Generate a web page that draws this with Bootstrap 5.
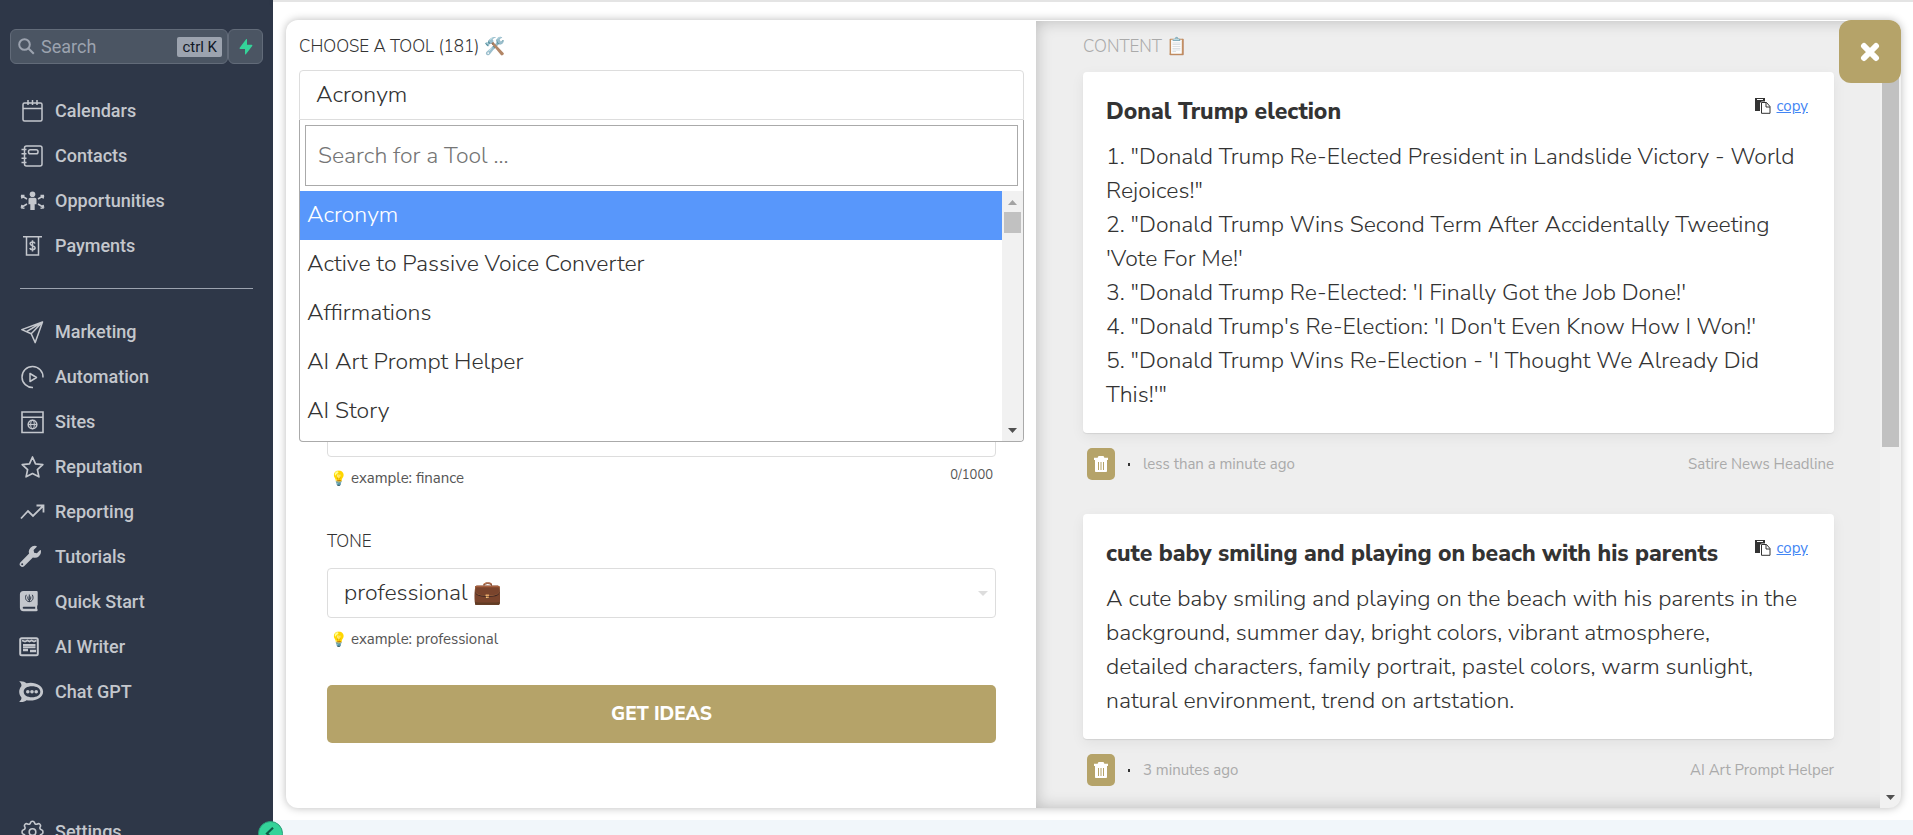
<!DOCTYPE html>
<html lang="en">
<head>
<meta charset="utf-8">
<meta name="viewport" content="width=device-width, initial-scale=1">
<title>AI Writer</title>
<link href="https://cdn.jsdelivr.net/npm/bootstrap@5.3.0/dist/css/bootstrap.min.css" rel="stylesheet">
<style>
  :root { --gold: #b5a369; --ink: #333; --line: #ddd; --muted: #aaa; }
  body { font-family: "Nunito Sans", Lato, "Open Sans", sans-serif; font-weight: 300; color: var(--ink); }
  textarea { resize: none; }

  /* Sidebar */
  .sidebar { width: 273px; padding: 29px 10px 0; background: #2e3748; font-family: Roboto, sans-serif; }
  .search-box, .bolt-btn { height: 35px; background: #4b5563; border: 1px solid #626b79; border-radius: 6px; }
  .search-box { padding: 0 5px 0 7px; gap: 6px; }
  .search-box input { width: 0; background: none; border: 0; outline: 0; padding: 0; color: #9ca3af; font-size: 18px; font-weight: 400; }
  .search-box input::placeholder { color: #9ca3af; opacity: 1; }
  .search-box kbd { background: #9ca3af; color: #111827; font: 400 15px/20px Roboto, sans-serif; padding: 0 5px; border-radius: 2px; }
  .bolt-btn { width: 35px; padding: 0; }
  .side-link { height: 45px; padding-left: 9px; gap: 10px; color: #c4c7cd; font-size: 18px; font-weight: 500; text-decoration: none; }
  .side-link:hover { color: #fff; }
  .side-link svg { width: 26px; height: 24px; flex: none; }
  .side-rule { margin: 20px 10px; border-color: #9ca3af; opacity: 1; }
  .side-foot { padding-top: 95px; }
  .collapse-btn { position: absolute; left: 258px; bottom: -11px; width: 25px; height: 25px; padding: 0; border: 1px solid #2a9d78; background: #34d399; z-index: 2; }

  /* Workspace */
  .topbar { height: 2px; background: #e4e4e4; box-shadow: 0 1px 6px rgba(0,0,0,.16); }
  .stage { padding: 18px 12px 12px 13px; background: #fff; }
  .bottom-strip { height: 15px; background: #f1f6fa; }
  .panel { grid-template-columns: minmax(0, 750fr) minmax(0, 865fr); border-radius: 12px; background: #fff; box-shadow: 0 0 8px rgba(0,0,0,.27); }
  .pane-left { padding: 0 12px 0 13px; }
  .pane-right { margin-top: 1px; border-radius: 0 12px 12px 0; overflow: hidden; background: #eee; box-shadow: inset 0 0 16px rgba(0,0,0,.22); }
  .feed { padding: 0 46px 0 47px; }
  .caption { font-size: 17px; line-height: 24px; }
  .caption-emoji { font-size: 17px; opacity: .8; }
  .pane-left > .caption { margin: 15px 0 11px; }
  .feed > .caption { margin: 14px 0 13px; color: var(--muted); }

  .field { border: 1px solid var(--line); border-radius: 4px; background: #fff; color: var(--ink); font-size: 23px; font-weight: 300; width: 100%; }
  select.field { appearance: none; height: 50px; padding: 1px 16px 0; }
  .tool-select { border-radius: 4px 4px 0 0; }

  .tool-menu { position: absolute; top: 50px; left: 0; right: 0; height: 322px; border: 1px solid #aaa; border-top: 0; border-radius: 0 0 4px 4px; background: #fff; overflow: hidden; z-index: 3; }
  .tool-search { margin: 5px; height: 61px; border: 1px solid #aaa; padding: 0 12px; font-size: 23px; font-weight: 300; outline: 0; color: var(--ink); }
  .tool-search::placeholder { color: #757575; opacity: 1; }
  .tool-item { height: 49px; padding: 0 7px; font-size: 23px; line-height: 48px; color: var(--ink); white-space: nowrap; flex: none; }
  .tool-item.active { background: #5897fb; color: #fff; }

  .track { width: 21px; background: #f1f1f1; flex: none; }
  .track .arrow { width: 9px; height: 5px; margin: 9px auto 7px; }
  .track .arrow.down { margin: auto auto 8px; }
  .thumb { width: 17px; margin: 0 2px; background: #c1c1c1; }

  .tool-form { padding: 263px 28px 0; }
  .topic { height: 74px; padding: 8px 17px; display: block; }
  .hint { font-size: 15px; line-height: 20px; font-weight: 400; color: #555; }
  .hint .bulb { display: inline-block; width: 21px; font-size: 14px; }
  .tool-form .hint { padding: 11px 0 0 3px; }
  .counter { font-size: 13px; line-height: 16px; font-weight: 400; color: #555; padding: 10px 3px 0; }
  .tone-caption { margin: 41px 0 14px; }
  .tone-wrap::after { content: ""; position: absolute; right: 8px; top: 23px; border: 5px solid transparent; border-top-color: var(--line); border-bottom: 0; }
  .go-btn { margin-top: 35px; height: 58px; border: 0; border-radius: 5px; background: var(--gold); color: #fff; font-size: 19px; font-weight: 800; }

  .close-btn { position: absolute; top: 0; right: 0; width: 62px; height: 63px; border: 0; border-radius: 12px; background: var(--gold); padding: 0; z-index: 2; }

  .result { background: #fff; border-radius: 4px; padding: 23px 20px 21px 23px; box-shadow: 0 1px 1px rgba(0,0,0,.08), 0 4px 14px rgba(0,0,0,.06); }
  .result-title { font-size: 23px; line-height: 34px; font-weight: 800; margin: 0 0 11px; }
  .result-text { font-size: 23px; line-height: 34px; margin: 0; }
  .copy-link { font-size: 15px; line-height: 22px; font-weight: 400; color: #4285f4; margin-right: 6px; gap: 6px; }
  .result-foot { margin: 14px 0 33px; padding-left: 4px; font-size: 15px; color: var(--muted); font-weight: 400; height: 34px; }
  .trash-btn { width: 28px; height: 32px; border: 0; border-radius: 5px; background: var(--gold); padding: 0; margin-right: 13px; }
  .dot-sep { width: 2px; height: 3px; background: #333; margin-right: 13px; }
</style>
</head>
<body>
<div class="d-flex vh-100 overflow-hidden position-relative">

  <nav class="sidebar flex-shrink-0 overflow-hidden" aria-label="Main">
    <div class="d-flex">
      <label class="search-box d-flex align-items-center flex-grow-1">
        <svg width="17" height="17" viewBox="0 0 17 17" fill="none" stroke="#9ca3af" stroke-width="2" class="flex-shrink-0" aria-hidden="true"><circle cx="6.5" cy="6.5" r="5.3"/><path d="M10.5 10.5l5.3 5.3"/></svg>
        <input type="search" class="flex-grow-1" placeholder="Search" aria-label="Search">
        <kbd>ctrl K</kbd>
      </label>
      <button type="button" class="bolt-btn d-flex align-items-center justify-content-center" aria-label="Quick actions">
        <svg width="14" height="16" viewBox="0 0 14 16" fill="#34d399" aria-hidden="true"><path d="M8 .6v5.1h4.6c.7 0 1 .7.6 1.200L6.900 15.200c-.4.400-.9.200-.9-.4V10H1.300c-.7 0-1-.7-.6-1.200L7.100.3c.4-.4.900-.3.900.3z"/></svg>
      </button>
    </div>

    <div class="mt-4">
      <a href="#" class="side-link d-flex align-items-center"><svg viewBox="0 0 26 24" fill="none" stroke="currentColor" stroke-width="1.500"><rect x="4" y="4" width="19" height="18" rx="1.500"/><path d="M4 9.500h19M9 1v5M13.500 1v5M18 1v5"/></svg>Calendars</a>
      <a href="#" class="side-link d-flex align-items-center"><svg viewBox="0 0 26 24" fill="none" stroke="currentColor" stroke-width="1.500"><rect x="5.500" y="2" width="17.500" height="20" rx="2"/><rect x="9.500" y="5.800" width="9.500" height="4" rx="1.800"/><path d="M2.500 5.500h5M2.500 9.800h5M2.500 14.200h5M2.500 18.500h5"/></svg>Contacts</a>
      <a href="#" class="side-link d-flex align-items-center"><svg viewBox="0 0 26 24" fill="currentColor"><circle cx="13.500" cy="5.300" r="2.800"/><path d="M11.300 8.800h4.400c1.100 0 1.800.8 1.800 1.800v4.600h-1.800V21h-4.400v-5.800H9.500v-4.600c0-1 .7-1.800 1.800-1.800z"/><path d="M2 6.500h3.500M3 9.500l-.6-3M3 7l5 3M25 6.500h-3.500M24 9.500l.6-3M24 7l-5 3M2 18.800l3.500.4M3 15.800l-.7 3M3 18l5-3M25 18.800l-3.500.4M24 15.800l.7 3M24 18l-5-3" fill="none" stroke="currentColor" stroke-width="1.500"/></svg>Opportunities</a>
      <a href="#" class="side-link d-flex align-items-center"><svg viewBox="0 0 26 24" fill="none" stroke="currentColor" stroke-width="1.500"><path d="M4 2.800h19M7.500 3v18h12V3"/><path d="M16 9.500c-.3-1-1.200-1.500-2.500-1.500s-2.400.6-2.400 1.800c0 2.500 5 1.300 5 4 0 1.200-1.100 1.900-2.600 1.900-1.400 0-2.400-.6-2.700-1.700M13.500 6.200v11.300" stroke-width="1.500"/></svg>Payments</a>
    </div>

    <hr class="side-rule">

    <div>
      <a href="#" class="side-link d-flex align-items-center"><svg viewBox="0 0 26 24" fill="none" stroke="currentColor" stroke-width="1.500" stroke-linejoin="round"><path d="M23.500 2L2.800 9.600l9.400 4.200 4 8.800zM12.200 13.800L23.500 2 7.500 11.700"/></svg>Marketing</a>
      <a href="#" class="side-link d-flex align-items-center"><svg viewBox="0 0 26 24" fill="none" stroke="currentColor" stroke-width="1.500" stroke-linejoin="round"><path d="M14 22.500A10.500 10.500 0 1 1 24 12.500M11 8.500v8l6.500-4z"/></svg>Automation</a>
      <a href="#" class="side-link d-flex align-items-center"><svg viewBox="0 0 26 24" fill="none" stroke="currentColor" stroke-width="1.600"><path d="M3 2h21v20.500H3zM3 7.200h21"/><circle cx="13.500" cy="14.500" r="4.300"/><ellipse cx="13.500" cy="14.500" rx="1.900" ry="4.300" stroke-width="1"/><path d="M9.200 14.500h8.600" stroke-width="1.200"/></svg>Sites</a>
      <a href="#" class="side-link d-flex align-items-center"><svg viewBox="0 0 26 24" fill="none" stroke="currentColor" stroke-width="1.700" stroke-linejoin="round"><path d="M13.500 2l3 6.800 7.300.8-5.400 5 1.500 7.200-6.400-3.300-6.400 3.300 1.500-7.200-5.400-5 7.300-.8z"/></svg>Reputation</a>
      <a href="#" class="side-link d-flex align-items-center"><svg viewBox="0 0 26 24" fill="none" stroke="currentColor" stroke-width="1.800"><path d="M2 18.500l7-7.500 5 5L24 6M17.500 5.500h7v7"/></svg>Reporting</a>
      <a href="#" class="side-link d-flex align-items-center"><svg viewBox="0 0 26 24" fill="currentColor" fill-rule="evenodd"><path d="M21.800 5.400c-.1-.4-.6-.5-.9-.2l-3 3-2.800-.5-.5-2.800 3-3c.3-.3.200-.8-.2-.9a6 6 0 0 0-7.300 7.600L1.300 17.400a2.700 2.700 0 0 0 3.800 3.800l8.800-8.800a6 6 0 0 0 7.900-7zM3.200 20.300a1 1 0 1 1 0-2 1 1 0 0 1 0 2z"/></svg>Tutorials</a>
      <a href="#" class="side-link d-flex align-items-center"><svg viewBox="0 0 26 24" fill="currentColor" fill-rule="evenodd"><path d="M4.500 1h13c.7 0 1.200.5 1.200 1.200v12.600c0 .4-.2.700-.5.900-.1.900-.1 2.400 0 3.300.4.300.5.700.5 1 0 .7-.5 1.200-1.200 1.200h-13A3.600 3.600 0 0 1 .9 17.600V4.600A3.600 3.600 0 0 1 4.500 1zm.2 15.800a1 1 0 0 0 0 2h11.500v-2z"/><path d="M7.300 4.800c-1.800 3.500-.2 6.600 3 6.900 3.200-.3 4.800-3.400 3-6.900M8.900 6.500c-.3 2 .3 3.200 1.400 4 1.100-.8 1.700-2 1.400-4M10.300 4.500v7.500" fill="none" stroke="#2e3748"/></svg>Quick Start</a>
      <a href="#" class="side-link d-flex align-items-center"><svg viewBox="0 0 26 24" fill="none" stroke="currentColor"><rect x="1.200" y="3.200" width="17.600" height="17" rx="1.500" stroke-width="2"/><path d="M3 5.500l3 1 2.500-1 2 1 2-1 2.500 1 2.500-1" stroke-width="1.700"/><path d="M4 10h12.500M4 12.200h12.500" stroke-width="2"/><path d="M4 15h5M11 16h6" stroke-width="2.400"/></svg>AI Writer</a>
      <a href="#" class="side-link d-flex align-items-center"><svg viewBox="0 0 26 24" fill="currentColor" fill-rule="evenodd"><path d="M.2 1.500C3 1 6 2 7.500 3.300c7.500-2 16.600 1.800 16.600 8.400S15 21.800 7.500 20.200C6 21.600 3 22.500.2 21.800 2 20.500 2.800 18.700 2.300 17.200c-2.800-3-2.800-7.800 0-11C2.800 4.500 2 2.800.2 1.500zM13 6.200c-5 0-8.300 2.200-8.300 5.500s3.300 5.500 8.300 5.500 8.300-2.200 8.300-5.500-3.300-5.500-8.300-5.500z"/><circle cx="8.800" cy="11.700" r="1.800"/><circle cx="13" cy="11.700" r="1.800"/><circle cx="17.200" cy="11.700" r="1.800"/></svg>Chat GPT</a>
    </div>

    <div class="side-foot">
      <a href="#" class="side-link d-flex align-items-center"><svg viewBox="0 0 26 24" fill="none" stroke="currentColor" stroke-width="1.600" stroke-linejoin="round"><path d="M13.500 1.200c1.300 0 1.800.6 2 1.600.3 1.300 1.700 1.900 2.900 1.200 1-.6 1.700-.5 2.500.3.900.9.900 1.600.3 2.500-.7 1.200-.1 2.600 1.200 2.900 1 .3 1.600.8 1.600 2.300s-.6 2-1.600 2.300c-1.300.3-1.900 1.700-1.200 2.900.6.9.6 1.600-.3 2.500-.8.800-1.500.9-2.500.3-1.200-.7-2.600-.1-2.900 1.200-.2 1-.7 1.600-2 1.600s-1.800-.6-2-1.600c-.3-1.300-1.700-1.900-2.900-1.200-1 .6-1.700.5-2.500-.3-.9-.9-.9-1.600-.3-2.500.7-1.200.1-2.600-1.200-2.900-1-.3-1.600-.8-1.600-2.300s.6-2 1.600-2.300C5.900 9.400 6.500 8 5.800 6.800c-.6-.9-.6-1.600.3-2.500.8-.8 1.500-.9 2.500-.3 1.200.7 2.600.1 2.900-1.200.2-1 .7-1.600 2-1.600z"/><circle cx="13.500" cy="12" r="3.300"/></svg>Settings</a>
    </div>
  </nav>

  <button type="button" class="collapse-btn rounded-circle d-flex align-items-center justify-content-center" aria-label="Collapse sidebar">
    <svg width="13" height="13" viewBox="0 0 13 13" fill="none" stroke="#0b5c47" stroke-width="2.200" aria-hidden="true"><path d="M9 .8L3 6.500l6 5.700"/></svg>
  </button>

  <main class="d-flex flex-column flex-grow-1">
    <div class="topbar"></div>
    <div class="stage flex-grow-1 d-flex">
      <div class="panel d-grid flex-grow-1 position-relative">

        <section class="pane-left">
          <label for="tool" class="caption d-block">CHOOSE A TOOL (181) <span class="caption-emoji">🛠️</span></label>
          <div class="position-relative">
            <select id="tool" class="field tool-select d-block"><option>Acronym</option></select>
            <div class="tool-menu d-flex flex-column">
              <input type="search" class="tool-search flex-shrink-0" placeholder="Search for a Tool ..." aria-label="Search for a Tool">
              <div class="d-flex flex-grow-1 overflow-hidden">
                <div class="d-flex flex-column flex-grow-1" role="listbox" aria-label="Tools">
                  <div class="tool-item active" role="option" aria-selected="true">Acronym</div>
                  <div class="tool-item" role="option">Active to Passive Voice Converter</div>
                  <div class="tool-item" role="option">Affirmations</div>
                  <div class="tool-item" role="option">AI Art Prompt Helper</div>
                  <div class="tool-item" role="option">AI Story</div>
                </div>
                <div class="track d-flex flex-column" aria-hidden="true">
                  <svg class="arrow flex-shrink-0" viewBox="0 0 9 5" fill="#a3a3a3"><path d="M0 5L4.500 0 9 5z"/></svg>
                  <div class="thumb flex-shrink-0" style="height:21px"></div>
                  <svg class="arrow down flex-shrink-0" viewBox="0 0 9 5" fill="#505050"><path d="M0 0l4.500 5L9 0z"/></svg>
                </div>
              </div>
            </div>
          </div>

          <form class="tool-form">
            <textarea class="field topic" maxlength="1000" aria-label="Topic"></textarea>
            <div class="d-flex justify-content-between">
              <div class="hint"><span class="bulb">💡</span>example: finance</div>
              <div class="counter">0/1000</div>
            </div>
            <label for="tone" class="caption tone-caption d-block">TONE</label>
            <div class="position-relative tone-wrap">
              <select id="tone" class="field d-block"><option>professional 💼</option></select>
            </div>
            <div class="hint"><span class="bulb">💡</span>example: professional</div>
            <button type="button" class="go-btn w-100">GET IDEAS</button>
          </form>
        </section>

        <section class="pane-right d-flex">
          <div class="feed flex-grow-1">
            <h2 class="caption fw-light">CONTENT <span class="caption-emoji">📋</span></h2>

            <article class="result">
              <div class="d-flex justify-content-between align-items-start">
                <h3 class="result-title">Donal Trump election</h3>
                <a href="#" class="copy-link d-flex align-items-center"><svg width="16" height="16" viewBox="0 0 16 16" aria-hidden="true"><path fill="#333" fill-rule="evenodd" d="M0 0h10v3.500H6.500L5 5v8H0zM2 1v1h6V1z"/><path fill="#fff" stroke="#333" d="M6.500 4.500h5l3.500 4v6.800H6.500zM11 4.500V9h4"/></svg>copy</a>
              </div>
              <p class="result-text">1. "Donald Trump Re-Elected President in Landslide Victory - World Rejoices!"<br>2. "Donald Trump Wins Second Term After Accidentally Tweeting 'Vote For Me!'<br>3. "Donald Trump Re-Elected: 'I Finally Got the Job Done!'<br>4. "Donald Trump's Re-Election: 'I Don't Even Know How I Won!'<br>5. "Donald Trump Wins Re-Election - 'I Thought We Already Did<br>This!'"</p>
            </article>
            <div class="result-foot d-flex align-items-center">
              <button type="button" class="trash-btn d-flex align-items-center justify-content-center" aria-label="Delete"><svg width="14" height="16" viewBox="0 0 14 16" aria-hidden="true"><path fill="#fff" d="M4.500 0h5l.9 1.800H14V4H0V1.800h3.600zM1 4h12v11c0 .6-.5 1-1 1H2c-.6 0-1-.4-1-1z"/><path stroke="#b5a369" d="M4.500 6v8M7 6v8M9.500 6v8"/></svg></button>
              <span class="dot-sep"></span><span>less than a minute ago</span><span class="ms-auto">Satire News Headline</span>
            </div>

            <article class="result">
              <div class="d-flex justify-content-between align-items-start">
                <h3 class="result-title">cute baby smiling and playing on beach with his parents</h3>
                <a href="#" class="copy-link d-flex align-items-center"><svg width="16" height="16" viewBox="0 0 16 16" aria-hidden="true"><path fill="#333" fill-rule="evenodd" d="M0 0h10v3.500H6.500L5 5v8H0zM2 1v1h6V1z"/><path fill="#fff" stroke="#333" d="M6.500 4.500h5l3.500 4v6.800H6.500zM11 4.500V9h4"/></svg>copy</a>
              </div>
              <p class="result-text">A cute baby smiling and playing on the beach with his parents in the background, summer day, bright colors, vibrant atmosphere,<br>detailed characters, family portrait, pastel colors, warm sunlight,<br>natural environment, trend on artstation.</p>
            </article>
            <div class="result-foot d-flex align-items-center mb-0">
              <button type="button" class="trash-btn d-flex align-items-center justify-content-center" aria-label="Delete"><svg width="14" height="16" viewBox="0 0 14 16" aria-hidden="true"><path fill="#fff" d="M4.500 0h5l.9 1.800H14V4H0V1.800h3.600zM1 4h12v11c0 .6-.5 1-1 1H2c-.6 0-1-.4-1-1z"/><path stroke="#b5a369" d="M4.500 6v8M7 6v8M9.500 6v8"/></svg></button>
              <span class="dot-sep"></span><span>3 minutes ago</span><span class="ms-auto">AI Art Prompt Helper</span>
            </div>
          </div>
          <div class="track d-flex flex-column" aria-hidden="true">
            <svg class="arrow flex-shrink-0" viewBox="0 0 9 5" fill="#505050"><path d="M0 5L4.500 0 9 5z"/></svg>
            <div class="thumb" style="height:51.5%"></div>
            <svg class="arrow down flex-shrink-0" viewBox="0 0 9 5" fill="#505050"><path d="M0 0l4.500 5L9 0z"/></svg>
          </div>
        </section>

        <button type="button" class="close-btn d-flex align-items-center justify-content-center" aria-label="Close">
          <svg width="20" height="20" viewBox="0 0 20 20" stroke="#fff" stroke-width="6" stroke-linecap="round" aria-hidden="true"><path d="M4 4l12 12M16 4L4 16"/></svg>
        </button>
      </div>
    </div>
    <div class="bottom-strip"></div>
  </main>
</div>
<script src="https://cdn.jsdelivr.net/npm/bootstrap@5.3.0/dist/js/bootstrap.bundle.min.js"></script>
</body>
</html>
